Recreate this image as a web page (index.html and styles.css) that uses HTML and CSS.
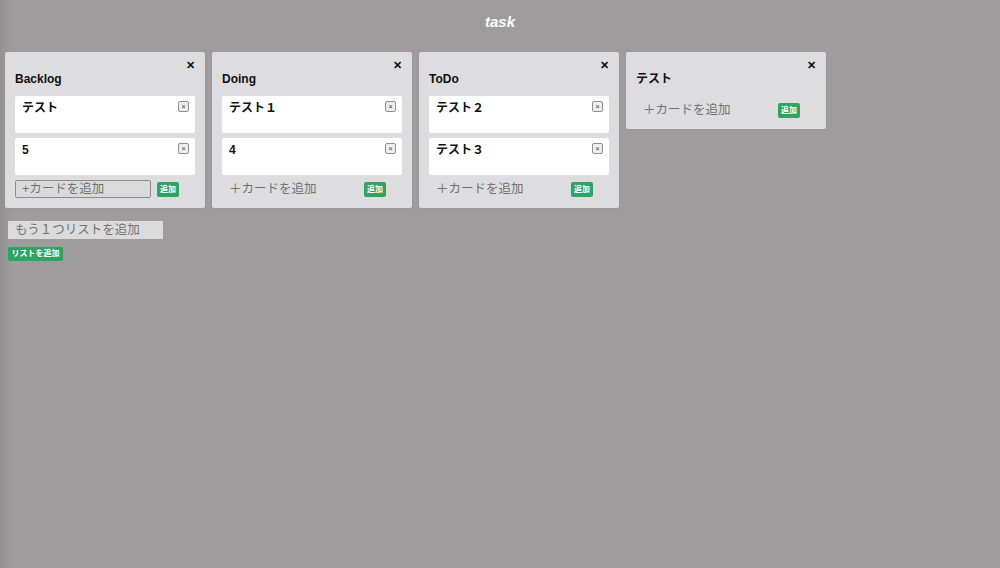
FILE: index.html
```html
<!DOCTYPE html>
<html lang="ja">

<head>
    <meta charset="UTF-8">
    <meta name="viewport" content="width=device-width, initial-scale=1.0">
    <title>task</title>
    <link rel="stylesheet" href="styles.css">
</head>

<body>
    <h1 class="app-title">task</h1>

    <div class="board">
        <div class="list">
            <button class="list-close">✕</button>
            <h2 class="list-title">Backlog</h2>
            <div class="card">
                <span>テスト</span>
                <button class="card-delete">×</button>
            </div>
            <div class="card">
                <span>5</span>
                <button class="card-delete">×</button>
            </div>
            <div class="add-row">
                <input type="text" class="add-input focused" placeholder="+カードを追加">
                <button class="add-btn">追加</button>
            </div>
        </div>

        <div class="list">
            <button class="list-close">✕</button>
            <h2 class="list-title">Doing</h2>
            <div class="card">
                <span>テスト１</span>
                <button class="card-delete">×</button>
            </div>
            <div class="card">
                <span>4</span>
                <button class="card-delete">×</button>
            </div>
            <div class="add-row">
                <input type="text" class="add-input" placeholder="＋カードを追加">
                <button class="add-btn">追加</button>
            </div>
        </div>

        <div class="list">
            <button class="list-close">✕</button>
            <h2 class="list-title">ToDo</h2>
            <div class="card">
                <span>テスト２</span>
                <button class="card-delete">×</button>
            </div>
            <div class="card">
                <span>テスト３</span>
                <button class="card-delete">×</button>
            </div>
            <div class="add-row">
                <input type="text" class="add-input" placeholder="＋カードを追加">
                <button class="add-btn">追加</button>
            </div>
        </div>

        <div class="list">
            <button class="list-close">✕</button>
            <h2 class="list-title">テスト</h2>
            <div class="add-row">
                <input type="text" class="add-input" placeholder="＋カードを追加">
                <button class="add-btn">追加</button>
            </div>
        </div>
    </div>

    <div class="new-list">
        <input type="text" class="new-list-input" placeholder="もう１つリストを追加">
        <button class="new-list-btn">リストを追加</button>
    </div>
</body>

</html>
```

FILE: styles.css
```css
body {
    font-family: "Liberation Sans", "Noto Sans CJK JP", sans-serif;
    background: linear-gradient(to right, #939192 0, #9b999a 8px, #9e9c9d 14px);
    background-color: #9e9c9d;
    margin: 0;
    padding: 0;
    min-height: 568px;
}

button {
    font-family: inherit;
    cursor: pointer;
}

.app-title {
    margin: 0;
    padding-top: 13px;
    height: 40px;
    box-sizing: border-box;
    text-align: center;
    font-size: 15px;
    font-style: italic;
    font-weight: bold;
    color: #fff;
}

.board {
    display: flex;
    align-items: flex-start;
    gap: 7px;
    padding: 12px 5px 0;
}

.list {
    display: flex;
    flex-direction: column;
    width: 200px;
    padding: 7px 10px 10px;
    box-sizing: border-box;
    background-color: #dddcde;
    border-radius: 2px;
    box-shadow: 0 0 2px rgba(0, 0, 0, 0.08);
}

.list-close {
    align-self: flex-end;
    height: 13px;
    margin-right: 0;
    padding: 0;
    border: none;
    background: none;
    font-size: 11px;
    font-weight: bold;
    line-height: 13px;
    color: #111;
}

.list-title {
    margin: 0 0 10px;
    height: 14px;
    font-size: 12px;
    line-height: 14px;
    font-weight: bold;
    color: #111;
}

.card {
    display: flex;
    justify-content: space-between;
    align-items: flex-start;
    height: 37px;
    padding: 6px 6px 0 7px;
    box-sizing: border-box;
    background-color: #fff;
    border-radius: 2px;
    font-size: 12px;
    font-weight: bold;
    line-height: 12px;
    color: #111;
}

.card + .card {
    margin-top: 5px;
}

.card-delete {
    width: 11px;
    height: 11px;
    margin-top: -1px;
    padding: 0;
    border: 1px solid #8f8f8f;
    border-radius: 2px;
    background-color: #eeeeee;
    font-size: 7px;
    line-height: 8px;
    color: #333;
}

.add-row {
    display: flex;
    align-items: center;
    gap: 6px;
    height: 18px;
    margin-top: 5px;
}

.add-input {
    width: 136px;
    height: 18px;
    padding: 0 7px;
    box-sizing: border-box;
    border: none;
    border-radius: 2px;
    background: transparent;
    font-family: inherit;
    font-size: 12.5px;
    color: #666;
}

.add-input::placeholder {
    color: #727272;
}

.add-input.focused {
    border: 1px solid #8c8c8c;
    padding-left: 6px;
    background-color: #dadadb;
}

.add-btn {
    width: 22px;
    height: 15px;
    padding: 0;
    border: none;
    border-radius: 2px;
    background-color: #2fa361;
    color: #fff;
    font-size: 8px;
    font-weight: bold;
    line-height: 15px;
}

.new-list {
    display: flex;
    flex-direction: column;
    align-items: flex-start;
    gap: 8px;
    padding: 13px 8px 0;
}

.new-list-input {
    width: 155px;
    height: 18px;
    padding: 0 7px;
    box-sizing: border-box;
    border: none;
    border-radius: 1px;
    background-color: #dcdbdc;
    font-family: inherit;
    font-size: 12.5px;
}

.new-list-input::placeholder {
    color: #727272;
}

.new-list-btn {
    width: 55px;
    height: 14px;
    padding: 0;
    border: none;
    border-radius: 2px;
    background-color: #2fa361;
    color: #fff;
    font-size: 8px;
    font-weight: bold;
    line-height: 14px;
}
```
